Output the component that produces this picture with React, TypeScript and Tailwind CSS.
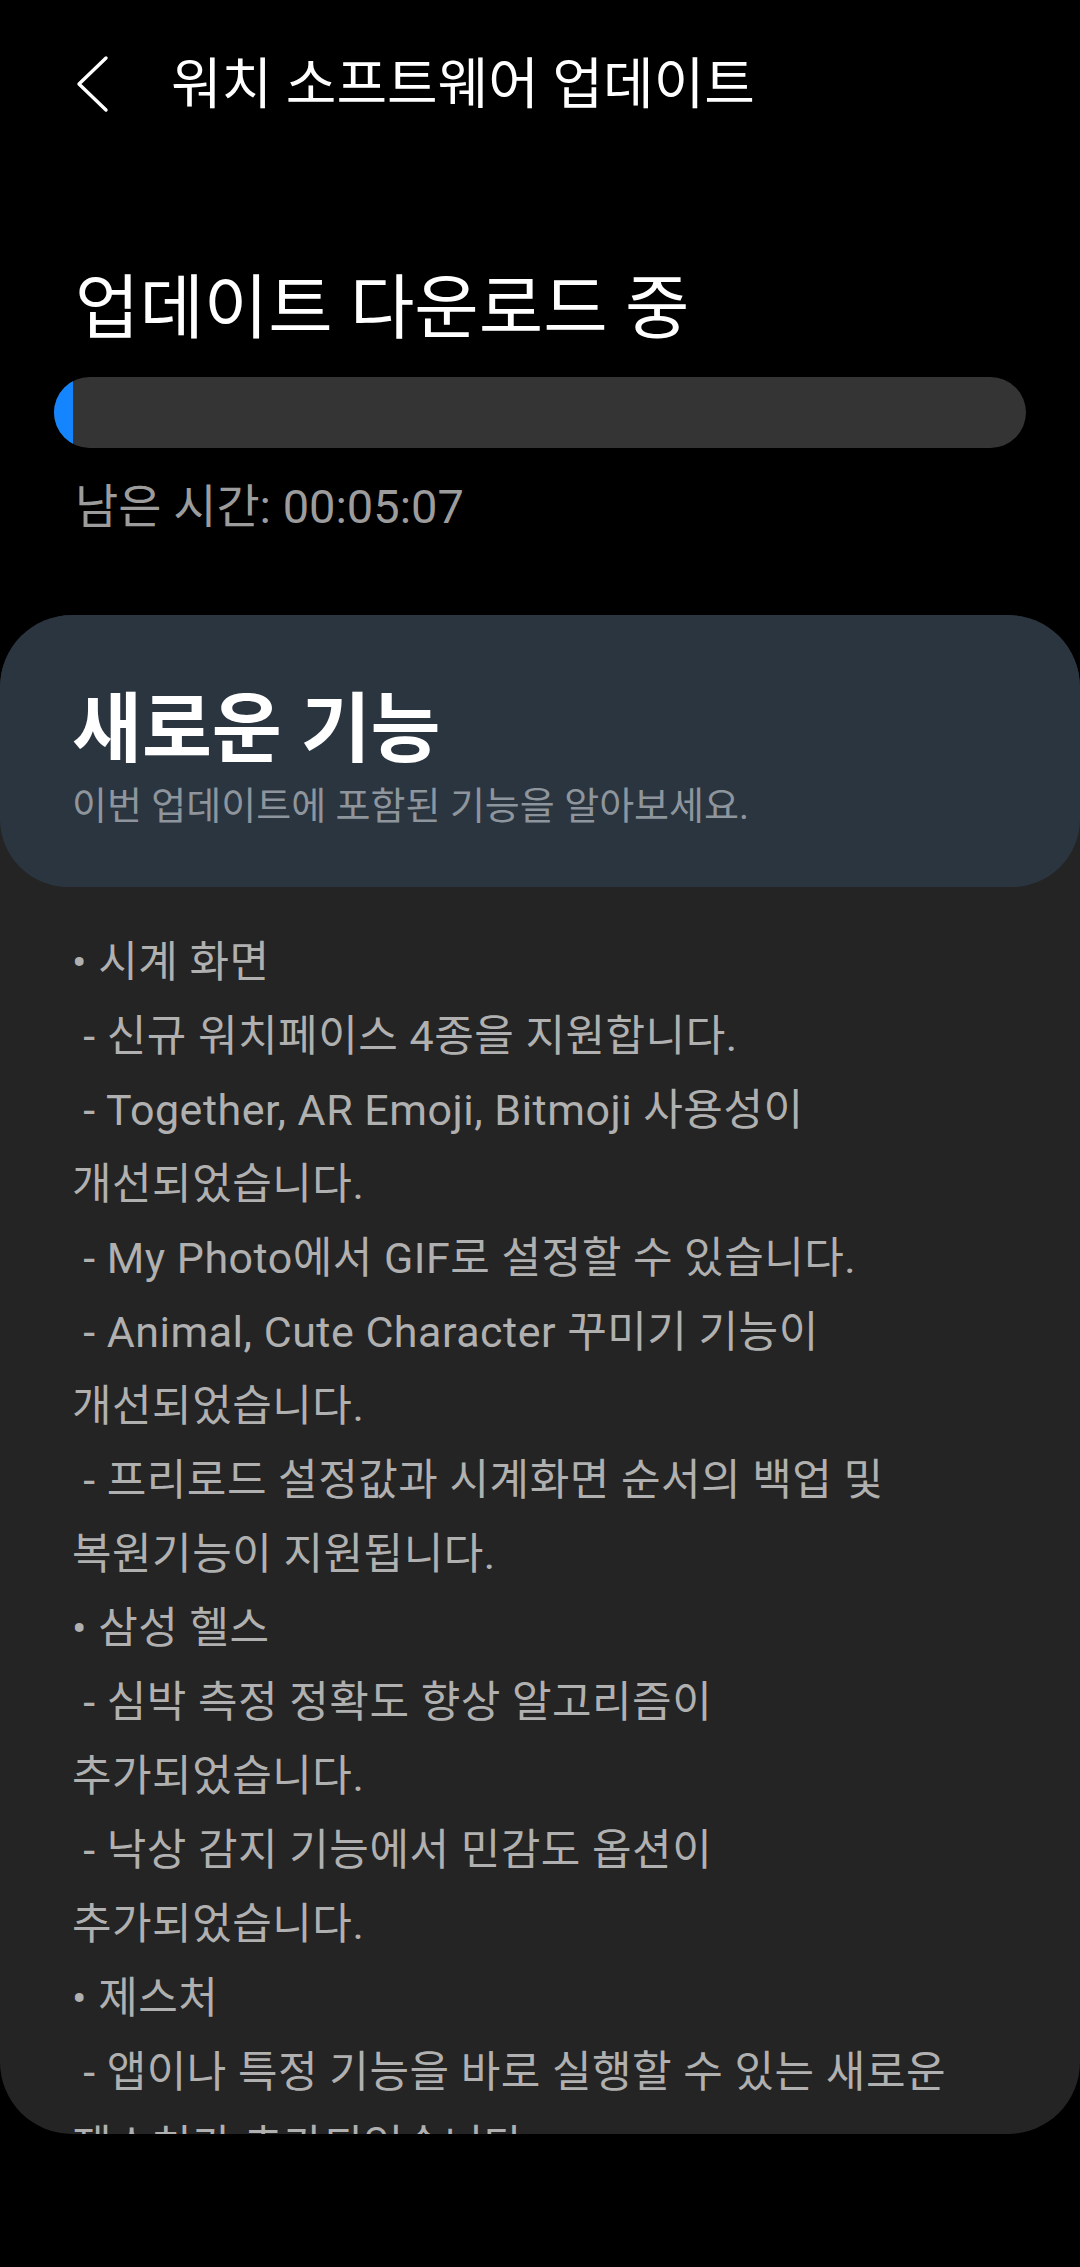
// Release notes, one entry per visual line (the wraps are fixed as in the screenshot)
const notes: string[] = [
  '• 시계 화면',
  ' - 신규 워치페이스 4종을 지원합니다.',
  ' - Together, AR Emoji, Bitmoji 사용성이',
  '개선되었습니다.',
  ' - My Photo에서 GIF로 설정할 수 있습니다.',
  ' - Animal, Cute Character 꾸미기 기능이',
  '개선되었습니다.',
  ' - 프리로드 설정값과 시계화면 순서의 백업 및',
  '복원기능이 지원됩니다.',
  '• 삼성 헬스',
  ' - 심박 측정 정확도 향상 알고리즘이',
  '추가되었습니다.',
  ' - 낙상 감지 기능에서 민감도 옵션이',
  '추가되었습니다.',
  '• 제스처',
  ' - 앱이나 특정 기능을 바로 실행할 수 있는 새로운',
  '제스처가 추가되었습니다.',
];

export default function App() {
  const progress = 2; // percent downloaded

  return (
    <div className="w-[1080px] h-[2267px] bg-black overflow-hidden font-['Roboto','Noto_Sans_CJK_KR',sans-serif]">
      {/* App bar */}
      <div className="h-[168px] flex items-center">
        <button className="ml-[75px] w-[36px] h-[60px] flex items-center justify-center">
          <svg width="36" height="60" viewBox="0 0 36 60" fill="none">
            <polyline
              points="31,4 4,30 31,56"
              stroke="white"
              strokeWidth="3.4"
              strokeLinecap="round"
              strokeLinejoin="round"
            />
          </svg>
        </button>
        <h1 className="ml-[60px] text-[55px] leading-[64px] text-white">
          워치 소프트웨어 업데이트
        </h1>
      </div>

      {/* Download status */}
      <div className="px-[54px]">
        <h2 className="mt-[101px] pl-[21px] text-[70px] leading-[80px] text-white">
          업데이트 다운로드 중
        </h2>
        <div className="mt-[28px] h-[71px] rounded-full bg-[#343434] overflow-hidden">
          <div className="h-full bg-[#1585ff]" style={{ width: `${progress}%` }} />
        </div>
        <p className="mt-[34px] pl-[21px] text-[47px] leading-[50px] text-[#9c9c9c]">
          남은 시간: 00:05:07
        </p>
      </div>

      {/* What's new card */}
      <div className="mt-[83px] h-[1519px] rounded-[72px] bg-[#242424] overflow-hidden">
        <div className="rounded-[68px] bg-[#2b3540] pt-[75px] pb-[59px] px-[72px]">
          <h3 className="text-[76px] leading-[80px] font-bold text-white">새로운 기능</h3>
          <p className="mt-[14px] text-[38px] leading-[44px] text-[#8e959c]">
            이번 업데이트에 포함된 기능을 알아보세요.
          </p>
        </div>
        <div className="pt-[38px] px-[72px]">
          {notes.map((line, i) => (
            <p key={i} className="whitespace-pre text-[43px] leading-[74px] tracking-[0.5px] text-[#b0b0b0]">
              {line}
            </p>
          ))}
        </div>
      </div>
    </div>
  );
}
